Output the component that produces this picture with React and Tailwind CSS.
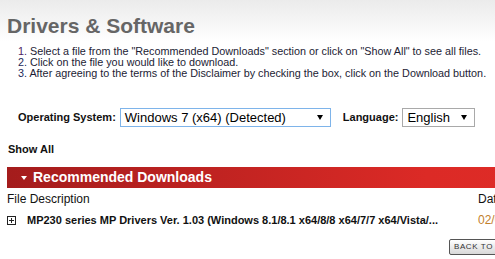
import React from "react";

const Caret = ({ className }) => (
  <svg className={className} width="6" height="5" viewBox="0 0 6 5">
    <polygon points="0,0 6,0 3,5" fill="#000" />
  </svg>
);

const steps = [
  'Select a file from the "Recommended Downloads" section or click on "Show All" to see all files.',
  "Click on the file you would like to download.",
  "After agreeing to the terms of the Disclaimer by checking the box, click on the Download button.",
];

const App = () => {
  return (
    <div className="w-[495px] h-[259px] overflow-hidden bg-[linear-gradient(to_bottom,#ebebeb_0px,#ffffff_42px)] font-['Liberation_Sans',Arial,sans-serif]">
      <div className="w-[600px] pl-[7px]">
        {/* heading */}
        <h1 className="pt-[14px] text-[21px] leading-[24px] font-bold text-[#666666]">
          Drivers &amp; Software
        </h1>

        {/* instructions */}
        <ol className="mt-[8px] pl-[11px] text-[10.8px] leading-[11px] text-[#1c1c34]">
          {steps.map((step, i) => (
            <li key={i} className="whitespace-nowrap">
              <span className={i === 0 ? "text-[#4e1f63]" : "text-[#1c2a5a]"}>{i + 1}.</span> {step}
            </li>
          ))}
        </ol>

        {/* selectors */}
        <div className="mt-[29px] pl-[11px] flex items-center h-[19px] text-[11px] font-bold text-[#111]">
          <span>Operating System:</span>
          <div className="ml-[4px] w-[211px] h-[19px] border border-[#7eb4ea] bg-white flex items-center justify-between pl-[4px] pr-[7px]">
            <span className="text-[13px] font-normal text-black">Windows 7 (x64) (Detected)</span>
            <Caret />
          </div>
          <span className="ml-[12px]">Language:</span>
          <div className="ml-[4px] w-[73px] h-[19px] border border-[#a9a9a9] bg-white flex items-center justify-between pl-[4px] pr-[7px]">
            <span className="text-[13px] font-normal text-black">English</span>
            <Caret />
          </div>
        </div>

        <div className="mt-[16px] pl-[1px] text-[11px] leading-[13px] font-bold text-[#111]">Show All</div>

        {/* recommended downloads bar */}
        <div className="mt-[11px] h-[21px] flex items-center bg-[linear-gradient(to_right,#a41c1c,#dc2a26_420px,#e02c27)] text-white">
          <svg className="ml-[14px]" width="6" height="4" viewBox="0 0 6 4">
            <polygon points="0,0 6,0 3,4" fill="#fff" />
          </svg>
          <span className="ml-[6px] text-[14px] leading-[21px] font-bold">Recommended Downloads</span>
        </div>

        {/* table */}
        <div className="mt-[4px] flex text-[12px] leading-[14px] text-[#111]">
          <div className="w-[471px]">File Description</div>
          <div>Date</div>
        </div>

        <div className="mt-[8px] flex items-center h-[13px]">
          <div className="w-[471px] flex items-center">
            <div className="relative w-[9px] h-[9px] border border-[#222] bg-white">
              <div className="absolute left-[1px] top-[3px] w-[5px] h-[1px] bg-[#222]" />
              <div className="absolute left-[3px] top-[1px] w-[1px] h-[5px] bg-[#222]" />
            </div>
            <span className="ml-[11px] text-[11px] leading-[13px] font-bold text-[#111] whitespace-nowrap">
              MP230 series MP Drivers Ver. 1.03 (Windows 8.1/8.1 x64/8/8 x64/7/7 x64/Vista/...
            </span>
          </div>
          <span className="text-[12px] leading-[13px] text-[#c27f2c]">02/05/2015</span>
        </div>

        <div className="mt-[12px] ml-[442px] flex">
          <button className="h-[16px] px-[4px] border border-[#555] rounded-[2px] bg-[linear-gradient(to_bottom,#ffffff,#d8d8d8)] text-[8px] leading-[14px] tracking-[0.6px] text-[#333] uppercase whitespace-nowrap">
            Back to top
          </button>
        </div>
      </div>
    </div>
  );
};

export default App;
